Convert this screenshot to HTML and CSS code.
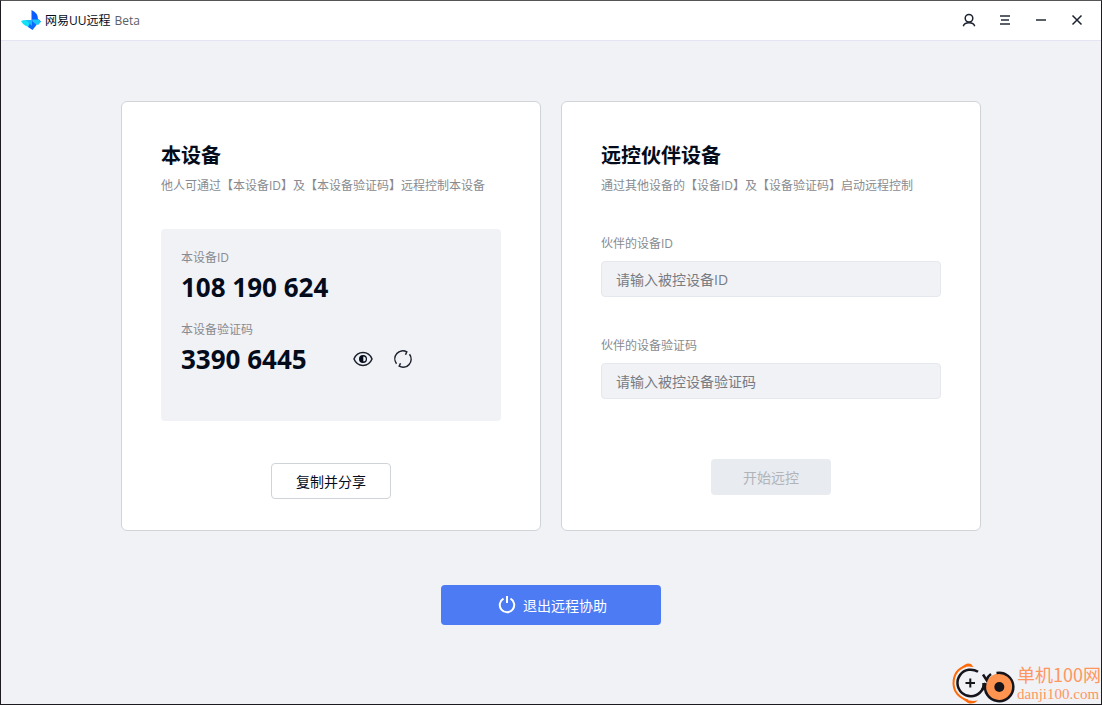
FILE: index.html
```html
<!DOCTYPE html>
<html lang="zh-CN">
<head>
<meta charset="utf-8">
<meta name="viewport" content="width=device-width, initial-scale=1">
<title>网易UU远程 Beta</title>
<link rel="stylesheet" href="styles.css">
</head>
<body>
<div class="window">
  <header class="titlebar">
    <div class="brand">
      <svg class="brand-logo" viewBox="0 0 20 20" aria-hidden="true">
        <path d="M10.500 0Q17 3 17 9L20 11.500 17 14.500 10.500 10Z" fill="#0a5cff"/>
        <path d="M11 9.500H17.500L20 11.500 17.500 14.500 14.500 15Z" fill="#16c8f8"/>
        <path d="M0 11Q2 10 5 10H11V17Q3.500 17.500 0 11Z" fill="#14e0f8"/>
        <path d="M7 17 10.500 10 15.500 15 11.500 20Z" fill="#0a6cff"/>
        <path d="M5 10H11V16Z" fill="#18b8fa"/>
      </svg>
      <span class="brand-name">网易UU远程</span>
      <span class="brand-tag">Beta</span>
    </div>
    <nav class="window-controls" aria-label="窗口">
      <button class="icon-button" type="button" aria-label="账户">
        <svg viewBox="0 0 16 16"><circle cx="8" cy="6.300" r="3.800"/><path d="M2.300 14.200C3 11.500 5.500 10.800 8 10.800S13 11.500 13.700 14.200"/></svg>
      </button>
      <button class="icon-button icon-soft" type="button" aria-label="菜单">
        <svg viewBox="0 0 16 16"><path d="M3 4H13M4 8H12M3 12H13"/></svg>
      </button>
      <button class="icon-button icon-soft" type="button" aria-label="最小化">
        <svg viewBox="0 0 16 16"><path d="M3 8H13"/></svg>
      </button>
      <button class="icon-button" type="button" aria-label="关闭">
        <svg viewBox="0 0 16 16"><path d="M3.500 3.500 12.500 12.500M12.500 3.500 3.500 12.500"/></svg>
      </button>
    </nav>
  </header>

  <main class="content">
    <div class="cards">
      <section class="card">
        <h2 class="card-title">本设备</h2>
        <p class="card-desc">他人可通过【本设备ID】及【本设备验证码】远程控制本设备</p>
        <div class="device-panel">
          <div class="label">本设备ID</div>
          <div class="code-row"><span class="code">108 190 624</span></div>
          <div class="label">本设备验证码</div>
          <div class="code-row">
            <span class="code code-pass">3390 6445</span>
            <button class="code-button" type="button" aria-label="显示验证码">
              <svg viewBox="0 0 20 20"><path d="M1 10C4.500 1.400 15.500 1.400 19 10C15.500 18.600 4.500 18.600 1 10Z"/><circle cx="10" cy="10" r="4" fill="#040c1c" stroke="none"/><path d="M10.300 7.500A2.500 2.500 0 0 1 10.300 12.500Z" fill="#f1f2f6" stroke="none"/></svg>
            </button>
            <button class="code-button" type="button" aria-label="刷新验证码">
              <svg viewBox="0 0 20 20"><path d="M3.500 14.700A8 8 0 0 1 13.800 2.900L12.500 5.800M16.500 5.300A8 8 0 0 1 6.200 17.100L7.500 14.200"/></svg>
            </button>
          </div>
        </div>
        <button class="button button-outline" type="button">复制并分享</button>
      </section>

      <form class="card">
        <h2 class="card-title">远控伙伴设备</h2>
        <p class="card-desc">通过其他设备的【设备ID】及【设备验证码】启动远程控制</p>
        <div class="fields">
          <div class="field">
            <label class="label" for="partner-id">伙伴的设备ID</label>
            <input class="input" id="partner-id" type="text" placeholder="请输入被控设备ID">
          </div>
          <div class="field">
            <label class="label" for="partner-code">伙伴的设备验证码</label>
            <input class="input" id="partner-code" type="text" placeholder="请输入被控设备验证码">
          </div>
        </div>
        <button class="button button-disabled" type="submit" disabled>开始远控</button>
      </form>
    </div>

    <button class="exit-button" type="button">
      <svg viewBox="1 1 16 16" aria-hidden="true"><path d="M5.500 2.700A7.200 7.200 0 1 0 12.500 2.700M9 0V7"/></svg>
      <span>退出远程协助</span>
    </button>
  </main>

  <div class="watermark">
    <svg class="watermark-logo" viewBox="0 0 64 42" aria-hidden="true">
      <path d="M14 4Q1.500 8 1.500 21.500 2 34 16 38.500" fill="none" stroke="#ff6a0a" stroke-width="2"/>
      <path d="M9 6Q14 0 19 2L21.500 5Q14 3.500 9 6ZM9 36Q17 40 26 38.500Q21 43 16 41Z" fill="#ff6a0a"/>
      <path d="M26 9.800A13.300 13.300 0 1 0 28 30.500Q32 27 31.500 21" fill="none" stroke="#15151b" stroke-width="2.500"/>
      <path d="M13.500 21H23M18.300 16.500V25.500" stroke="#15151b" stroke-width="2"/>
      <circle cx="47.300" cy="25" r="13.500" fill="#ff9350"/>
      <path d="M31 12.500 34.500 18Q36 14 39 12M44.500 11A14.200 14.200 0 1 1 33.500 21Q33 25 30 28" fill="none" stroke="#15151b" stroke-width="2.500"/>
      <circle cx="47.300" cy="25" r="5" fill="#15151b"/>
    </svg>
    <div class="watermark-text">
      <span class="watermark-name">单机100网</span>
      <span class="watermark-site">danji100.com</span>
    </div>
  </div>
</div>
</body>
</html>
```

FILE: styles.css
```css
* {
  box-sizing: border-box;
}

body {
  margin: 0;
  font-family: "Open Sans", "Noto Sans CJK SC", sans-serif;
  font-size: 14px;
  color: #040c1c;
}

button,
input {
  font: inherit;
  color: inherit;
}

button {
  padding: 0;
  border: 0;
  background: none;
}

.window {
  position: relative;
  display: flex;
  flex-direction: column;
  min-height: 100vh;
  border: 1px solid #1c1c20;
  border-top-color: #555;
  background: #f1f2f6;
}

.titlebar {
  display: flex;
  align-items: center;
  justify-content: space-between;
  height: 40px;
  padding: 0 16px 1px 20px;
  border-bottom: 1px solid #e5e4f4;
  background: #fff;
}

.brand {
  display: flex;
  align-items: center;
  gap: 4px;
  font-size: 12px;
}

.brand-logo {
  width: 20px;
  height: 20px;
}

.brand-tag {
  color: #5c6068;
}

.window-controls {
  display: flex;
  gap: 20px;
}

.icon-button {
  display: flex;
  width: 16px;
  height: 16px;
}

svg {
  flex: none;
}

.icon-button svg,
.code-button svg {
  width: 100%;
  height: 100%;
  fill: none;
  stroke: #1c222e;
  stroke-width: 1.5;
}

.icon-soft svg {
  stroke: #5a5f68;
  stroke-width: 2;
}

.content {
  display: flex;
  flex: 1;
  flex-direction: column;
  align-items: center;
  padding: 60px 20px;
}

.cards {
  display: grid;
  grid-template-columns: 1fr 1fr;
  gap: 20px;
  width: 100%;
  max-width: 860px;
}

.card {
  display: flex;
  flex-direction: column;
  align-items: stretch;
  padding: 40px 39px 31px;
  border: 1px solid #d0d3d8;
  border-radius: 6px;
  background: #fff;
}

.card-title {
  margin: 0;
  font-size: 20px;
  line-height: 28px;
}

.card-desc {
  margin: 6px 0 33px;
  color: #888b91;
  font-size: 12px;
  line-height: 20px;
}

.label {
  display: block;
  color: #888b91;
  font-size: 12px;
  line-height: 18px;
}

.device-panel {
  display: flex;
  flex-direction: column;
  min-height: 192px;
  padding: 20px;
  border-radius: 4px;
  background: #f1f2f6;
}

.code-row {
  display: flex;
  align-items: center;
  gap: 20px;
  height: 36px;
  margin: 2px 0 16px;
}

.code {
  font-size: 26px;
  font-weight: 700;
  line-height: 36px;
}

.code-pass {
  width: 152px;
}

.code-button {
  display: flex;
  width: 20px;
  height: 20px;
}

.fields {
  display: grid;
  gap: 40px;
  padding-top: 6px;
}

.field {
  display: grid;
  gap: 8px;
}

.input {
  width: 100%;
  height: 36px;
  padding: 0 14px;
  border: 1px solid #e5e8ee;
  border-radius: 4px;
  background: #f1f2f6;
}

.input::placeholder {
  color: #777b82;
  opacity: 1;
}

.button {
  align-self: center;
  width: 120px;
  height: 36px;
  margin-top: auto;
  border-radius: 4px;
}

.button-outline {
  border: 1px solid #d0d3d8;
  background: #fff;
}

.button-disabled {
  margin-top: 60px;
  margin-bottom: 4px;
  background: #e8ebef;
  color: #b0b4ba;
}

.exit-button {
  display: flex;
  align-items: center;
  justify-content: center;
  gap: 8px;
  width: 220px;
  height: 40px;
  margin-top: 54px;
  padding-left: 4px;
  border-radius: 4px;
  background: #4c7bf4;
  color: #fff;
}

.exit-button svg {
  width: 16px;
  height: 16px;
  overflow: visible;
  fill: none;
  stroke: #fff;
  stroke-width: 2;
}

.watermark {
  position: absolute;
  right: 0;
  bottom: 0;
  display: flex;
  align-items: flex-end;
  gap: 1px;
  color: #ff9660;
}

.watermark-logo {
  width: 64px;
  height: 42px;
}

.watermark-text {
  display: flex;
  flex-direction: column;
}

.watermark-name {
  font-family: "Noto Sans CJK SC", sans-serif;
  font-size: 18px;
  line-height: 20px;
}

.watermark-site {
  font-family: "Liberation Serif", "Noto Sans CJK SC", serif;
  font-size: 15px;
  line-height: 20px;
}
```
